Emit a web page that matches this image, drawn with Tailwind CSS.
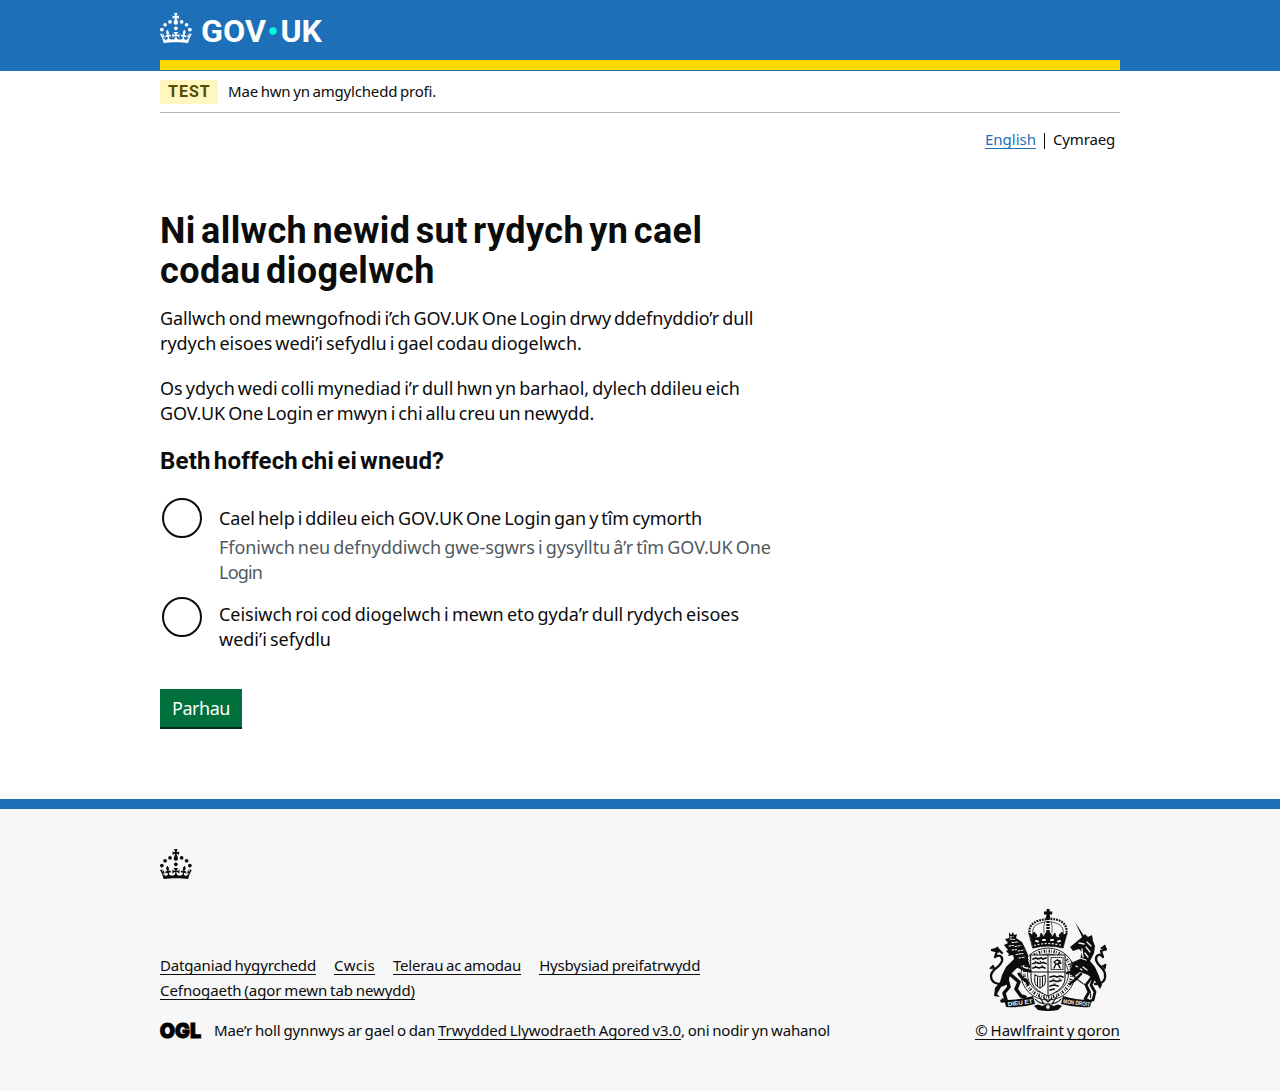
<!DOCTYPE html>
<html lang="cy">
<head>
<meta charset="utf-8">
<title>Ni allwch newid sut rydych yn cael codau diogelwch</title>
<script src="https://cdn.jsdelivr.net/npm/@tailwindcss/browser@4"></script>
</head>
<body class="bg-white text-[#0b0c0c] font-['Noto_Sans',sans-serif]">
<svg class="hidden">
  <symbol id="crown" viewBox="0 0 64 60">
    <circle cx="20" cy="17.6" r="3.7"/><circle cx="10.2" cy="23.5" r="3.7"/><circle cx="3.7" cy="33.2" r="3.7"/><circle cx="31.7" cy="30.6" r="3.7"/><circle cx="43.3" cy="17.6" r="3.7"/><circle cx="53.2" cy="23.5" r="3.7"/><circle cx="59.7" cy="33.2" r="3.7"/>
    <path d="M33.1,9.8c.2-.1.3-.3.5-.5l4.6,2.4v-6.8l-4.6,1.5c-.1-.2-.3-.3-.5-.5l1.9-5.9h-6.7l1.9,5.9c-.2.1-.3.3-.5.5l-4.6-1.5v6.8l4.6-2.4c.1.2.3.3.5.5l-2.6,8c-.9,2.8,1.2,5.7,4.1,5.7h0c3,0,5.1-2.9,4.1-5.7l-2.6-8ZM37,37.9s-3.4,3.8-4.1,6.1c2.2,0,4.2-.5,6.4-2.8l-.7,8.5c-2-2.8-4.4-4.1-5.7-3.8.1,3.1.5,6.7,5.8,7.2,3.7.3,6.7-1.5,7-3.8.4-2.6-2-4.3-3.7-1.6-1.4-4.5,2.4-6.1,4.9-3.2-1.9-4.5-1.8-7.7,2.4-10.9,3,4,2.6,7.3-1.2,11.1,2.4-1.3,6.2,0,4,4.6-1.2-2.8-3.7-2.2-4.2.2-.3,1.7.7,3.7,3,4.2,1.9.3,4.7-.9,7-5.9-1.3,0-2.4.7-3.9,1.7l2.4-8c.6,2.3,1.4,3.7,2.2,4.5.6-1.6.5-2.8,0-5.3l5,1.8c-2.6,3.6-5.2,8.7-7.3,17.5-7.4-1.1-15.7-1.7-24.5-1.7h0c-8.8,0-17.1.6-24.5,1.7-2.1-8.9-4.7-13.9-7.3-17.5l5-1.8c-.5,2.5-.6,3.7,0,5.3.8-.8,1.6-2.3,2.2-4.5l2.4,8c-1.5-1-2.6-1.7-3.9-1.7,2.3,5,5.2,6.2,7,5.9,2.3-.4,3.3-2.4,3-4.2-.5-2.4-3-3.1-4.2-.2-2.2-4.6,1.6-6,4-4.6-3.7-3.7-4.2-7.1-1.2-11.1,4.2,3.2,4.3,6.4,2.4,10.9,2.5-2.8,6.3-1.3,4.9,3.2-1.8-2.7-4.1-1-3.7,1.6.3,2.3,3.3,4.1,7,3.8,5.4-.5,5.7-4.2,5.8-7.2-1.3-.2-3.7,1-5.7,3.8l-.7-8.5c2.2,2.3,4.2,2.7,6.4,2.8-.7-2.3-4.1-6.1-4.1-6.1h10.6,0Z"/>
  </symbol>
</svg>

<header class="h-[71px] bg-[#1d70b8] text-white">
  <div class="mx-auto flex h-[70px] w-[960px] flex-col justify-between border-b-[10px] border-[#ffd900] pt-[13px]">
    <svg class="h-[30px] w-[166px] overflow-visible" viewBox="0 0 166 30" fill="#fff" font-family="Roboto, sans-serif" font-weight="700" font-size="31">
      <use href="#crown" width="32" height="30"/>
      <text x="41" y="29" textLength="65" lengthAdjust="spacingAndGlyphs">GOV</text>
      <circle cx="113" cy="18" r="3.7" fill="#00ffe0"/>
      <text x="120.5" y="29" textLength="41.5" lengthAdjust="spacingAndGlyphs">UK</text>
    </svg>
  </div>
</header>

<div class="mx-auto w-[960px]">
  <div class="flex h-[42px] items-center border-b border-[#b1b4b6] text-[15px] [word-spacing:-1px]">
    <strong class="flex h-6 w-[58px] items-center bg-[#fff7bf] pl-2 font-[Roboto] text-base tracking-[1px] text-[#594d00]">TEST</strong>
    <span class="ml-2.5 whitespace-nowrap tracking-[-0.18px]">Mae hwn yn amgylchedd profi.</span>
  </div>
  <nav class="mt-4 flex h-5 items-center justify-end pr-[5px] text-[15px]">
    <a class="border-b border-[#1d70b8] leading-[18px] text-[#1d70b8]">English</a>
    <span class="mx-2 mt-1 h-4 w-px bg-[#0b0c0c]"></span>
    <span class="tracking-[-0.17px]">Cymraeg</span>
  </nav>

  <main class="h-[650px] pt-[62px] whitespace-nowrap">
    <h1 class="font-[Roboto] text-[36px] leading-10 font-bold tracking-[0.4px] [word-spacing:-4px]">Ni allwch newid sut rydych yn cael<br>codau diogelwch</h1>
    <div class="text-[18px] leading-[25px] [word-spacing:-1.5px]">
      <p class="mt-[15px]">
        <span class="tracking-[-0.1px]">Gallwch ond mewngofnodi i’ch GOV.UK One Login drwy ddefnyddio’r dull</span><br>
        <span class="tracking-[-0.05px]">rydych eisoes wedi’i sefydlu i gael codau diogelwch.</span>
      </p>
      <p class="mt-5">
        <span class="tracking-[-0.04px]">Os ydych wedi colli mynediad i’r dull hwn yn barhaol, dylech ddileu eich</span><br>
        <span class="tracking-[-0.09px]">GOV.UK One Login er mwyn i chi allu creu un newydd.</span>
      </p>
      <h2 class="mt-5 font-[Roboto] text-2xl leading-[30px] font-bold tracking-[0.2px] [word-spacing:-3px]">Beth hoffech chi ei wneud?</h2>
      <div class="mt-[22px] ml-0.5 flex gap-[17px]">
        <span class="size-10 rounded-full border-2 border-[#0b0c0c]"></span>
        <div class="pt-2">
          <span class="tracking-[-0.09px]">Cael help i ddileu eich GOV.UK One Login gan y tîm cymorth</span>
          <div class="mt-1 text-[#505a5f]">
            <span class="tracking-[-0.05px]">Ffoniwch neu defnyddiwch gwe-sgwrs i gysylltu â’r tîm GOV.UK One</span><br>
            <span class="tracking-[-0.8px]">Login</span>
          </div>
        </div>
      </div>
      <div class="mt-3 ml-0.5 flex gap-[17px]">
        <span class="size-10 rounded-full border-2 border-[#0b0c0c]"></span>
        <div class="pt-[5px]">
          <span class="tracking-[-0.02px]">Ceisiwch roi cod diogelwch i mewn eto gyda’r dull rydych eisoes</span><br>
          <span>wedi’i sefydlu</span>
        </div>
      </div>
    </div>
    <button class="mt-[37px] flex h-10 w-[82px] items-center justify-center border-b-2 border-[#002d18] bg-[#00703c] text-[18px] tracking-[-0.45px] text-white">Parhau</button>
  </main>
</div>

<footer class="h-[292px] border-t-[10px] border-[#1d70b8] bg-[#f7f7f7] pt-10 text-[15px] whitespace-nowrap [word-spacing:-1px]">
  <div class="mx-auto w-[960px]">
    <svg class="h-[30px] w-8" fill="#0b0c0c"><use href="#crown" width="32" height="30"/></svg>
    <div class="mt-[29px] flex items-end justify-between">
      <div>
        <div class="flex h-[25px] gap-[18px] leading-[17px]">
          <a class="h-[18px] border-b border-[#0b0c0c] tracking-[-0.16px]">Datganiad hygyrchedd</a>
          <a class="h-[18px] border-b border-[#0b0c0c] tracking-[0.3px]">Cwcis</a>
          <a class="h-[18px] border-b border-[#0b0c0c] tracking-[-0.2px]">Telerau ac amodau</a>
          <a class="h-[18px] border-b border-[#0b0c0c] tracking-[-0.16px]">Hysbysiad preifatrwydd</a>
        </div>
        <div class="flex h-10 leading-[17px]"><a class="h-[18px] border-b border-[#0b0c0c] tracking-[-0.07px]">Cefnogaeth (agor mewn tab newydd)</a></div>
        <div class="flex h-[18px] leading-[17px]">
          <svg class="mr-[13px] h-[18px] w-[41px] overflow-visible" viewBox="0 0 41 18" font-family="Inter, sans-serif" font-weight="900" font-size="20.5" stroke="#000" stroke-width=".9"><text x="-0.3" y="16.3" textLength="41.500" lengthAdjust="spacingAndGlyphs">OGL</text></svg>
          <span class="tracking-[-0.11px]">Mae’r holl gynnwys ar gael o dan&nbsp;</span>
          <a class="h-[18px] border-b border-[#0b0c0c] tracking-[-0.07px]">Trwydded Llywodraeth Agored v3.0</a>
          <span class="tracking-[-0.16px]">, oni nodir yn wahanol</span>
        </div>
      </div>
      <a class="flex w-[145px] flex-col items-center leading-[17px]">
        <svg class="mb-[10px] h-[104px] w-[118px] overflow-visible" viewBox="0 0 118 104" fill="#0b0c0c" stroke="#0b0c0c" stroke-linecap="round" stroke-linejoin="round">
          <!-- royal crown -->
          <g>
            <path d="M57.6 1h3v2.5h2.6v3h-2.6l.8 3.5h-4.6l.8-3.5H55v-3h2.6z" stroke="none"/>
            <path d="M41 27C38 16 47 12 59 11s21 5 18 16" fill="none" stroke-width="2.2" stroke-dasharray="1.8 1" stroke-linecap="butt"/>
            <path d="M44 26c-2-8 5-11 12-12M74 26c2-8-5-11-12-12" fill="none" stroke-width=".7"/>
            <path d="M59 10v16" stroke-width="3.4" stroke-dasharray="2 1" stroke-linecap="butt"/>
            <path d="M56 13q-2 6-1 12M62 13q2 6 1 12" fill="none" stroke-width=".6"/>
            <path d="M40 25l3 2 2-3 3 3-1 3 4-1 1-4 3 4 1-3 3-3 3 3 1 3 3-4 1 4 4 1-1-3 3-3 2 3 3-2-4 15q-15-4-30 0z" stroke-width=".8"/>
            <path d="M47 33l2 .5M54 32l2 0M62 32l2 0M69 33.5l2-.5" stroke="#f7f7f7" stroke-width="2"/>
            <path d="M45 37.5q14-4 28 0" stroke="#f7f7f7" stroke-width="1.2" stroke-dasharray="2 1.6" fill="none" stroke-linecap="butt"/>
          </g>
          <!-- garter and quartered shield -->
          <g fill="none">
            <ellipse cx="59" cy="66" rx="27" ry="26" fill="#f7f7f7" stroke-width=".9"/>
            <ellipse cx="59" cy="66" rx="23.7" ry="23" stroke-width="3.2" stroke-dasharray="1.3 1.2 .6 1.9" stroke-linecap="butt"/>
            <ellipse cx="59" cy="66" rx="20.5" ry="20" stroke-width=".8"/>
            <path d="M42 47h34v23c0 9-8 14-17 18-9-4-17-9-17-18z" fill="#f7f7f7" stroke-width="1"/>
            <path d="M59 47v40M42 64h34" stroke-width="1"/>
            <path d="M44 51l3-1 2 1 3-1 2 1 3-1M44 55.5l4-1 2 1 4-1 3 1M44 60l3-1 3 1 3-1 3 1M61 69l4-1 3 1 3-1 3 1M61 73.5l3-1 4 1 4-1M61 78l4-1 4 1M61 82l4-1" stroke-width="1.8"/>
            <path d="M46 53l1 1M51 53l1 1M46 58l1 .6M53 57.6l1 .6M64 71h1M70 71h1M65 76h1" stroke-width="1"/>
            <rect x="62" y="49.5" width="12" height="12" stroke-width=".9" stroke-dasharray="1 1"/>
            <path d="M65 60l2-4-2-2 3-2 3 1-2 3 2 4M68 56l4-1" stroke-width="1.4"/>
            <path d="M46 67c-1 8 0 11 5 13 5-2 6-5 5-13-2 2-7 2-10 0zM48.5 69v9M51 70v10M53.5 69v9" stroke-width="1"/>
          </g>
          <!-- crowned lion -->
          <g>
            <path d="M20 24l2 3 2-3 1 3 3-1-1 4 6 4 3 6 3 7 0 6 3 8-7-4-6 2-8 8-2 9-7 3-4 7 3 3-6-1 1-8 5-6 2-7 4-8 8-8-1-4-5 1 1-2-3-3 2-1-4-5 4-2-3-4 4-1z" stroke="none"/>
            <path d="M21 31l5 .5M23 34.5l6-.5M20 38l5-.5M26 38.5l6-1M23 42l5-.5M29 43l6-1M27 46.5l7-1M30 50l6-1M21 29l3-.5" stroke="#f7f7f7" stroke-width="1.1" stroke-dasharray="1.6 1.4"/>
            <path d="M28 58l8 4 5 1M30 66l4 5 3 1 2 4" fill="none" stroke-width="3"/>
            <path d="M22 67l8 7-3 7 5 7 4 1M18 71l2 8-5 6 2 7-4 1" fill="none" stroke-width="3.5"/>
            <path d="M16 76c-9 1-14-2-14-8 0-7 9-8 11-15 1-5-3-7-7-4l2-6-5-1 7 0 3 3" fill="none" stroke-width="2.3"/>
            <path d="M3 42l6-3 1 5zM1 60l3-3 2 4z"/>
          </g>
          <!-- chained unicorn -->
          <g>
            <path d="M86 14l11 17-2.5 1z" stroke="none"/>
            <path d="M96 26l3 3 4-2 1 6 2 5-1 7-4 8 5 6 4 9 3 9-2 4-5-8-7-6-8-3-7 5-3-5 3-10 7-3 2-7-3-3-6 2-3-4 5-4 6-5z" stroke="none"/>
            <path d="M90 35l5 1M98 34l4 4M97 39l4 5M96 45l3 4M87 58l6 4M94 59l4 3M93 41l1 8M91 50l6 2" stroke="#f7f7f7" stroke-width="1.3"/>
            <path d="M90 60l-8 4-4 1M92 66l-6 6-5 4" fill="none" stroke-width="2.5"/>
            <path d="M103 69l-6 8 3 7-4 7 4 2M105 70l-3 7 4 7-2 8" fill="none" stroke-width="2.8"/>
            <path d="M83 54c-4 8 3 17 12 22 5 3 8 8 6 15" fill="none" stroke-width="1.3" stroke-dasharray="1 1.5"/>
            <path d="M106 76c8 0 11-4 10-10-1-7-9-9-9-15 0-4 4-6 7-2l-2-6 5-2" fill="none" stroke-width="2.3"/>
            <path d="M112 40l4-3 1 5zM113 58l4-2-1 5z"/>
          </g>
          <!-- motto scroll and compartment -->
          <path d="M12 90l6 2q13 0 26-4l2 8q-14 4-29 3l-1-4zM106 90l-6 2q-13 0-26-4l-2 8q14 4 29 3l1-4z" stroke="none"/>
          <path d="M46 91q4 5 13 5t13-5M50 88l5 8M68 88l-5 8M55 90l4 4 4-4" fill="none" stroke-width="1.1"/>
          <path d="M45 98q4-3 8 0l6-2 6 2q4-3 8 0l-4 4q-10 2-20 0z" stroke="none"/>
          <circle cx="59" cy="99" r="2.4" fill="#f7f7f7" stroke-width="1"/>
          <g fill="#f7f7f7" stroke="none" font-family="Liberation Sans, sans-serif" font-weight="700" font-size="6" word-spacing="0">
            <text transform="translate(19 98.2) rotate(-7)" textLength="25" lengthAdjust="spacingAndGlyphs">DIEU ET</text>
            <text transform="translate(74 95.2) rotate(7)" textLength="27" lengthAdjust="spacingAndGlyphs">MON DROIT</text>
          </g>
        </svg>
        <span class="h-[18px] border-b border-[#0b0c0c]">© Hawlfraint y goron</span>
      </a>
    </div>
  </div>
</footer>
</body>
</html>
